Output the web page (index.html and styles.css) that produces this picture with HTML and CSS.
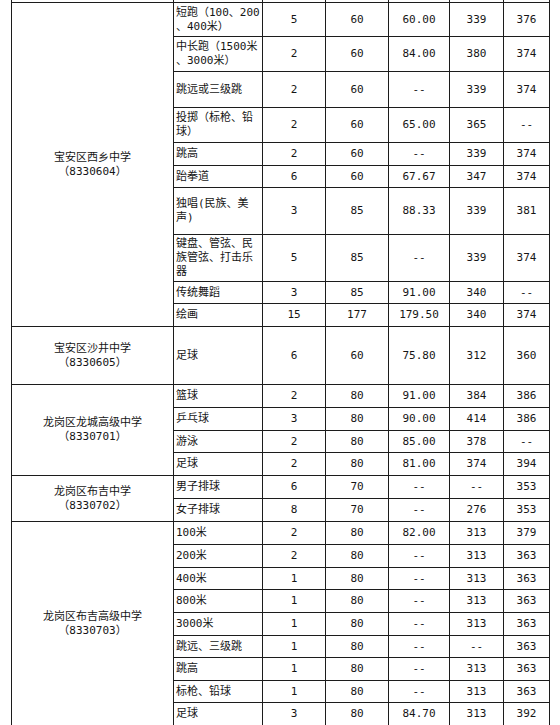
FILE: index.html
```html
<!DOCTYPE html>
<html lang="zh-CN">
<head>
<meta charset="utf-8">
<title>招生表</title>
<link rel="stylesheet" href="styles.css">
</head>
<body>
<table class="grid">
  <colgroup>
    <col class="c-school">
    <col class="c-item">
    <col class="c-num">
    <col class="c-full">
    <col class="c-avg">
    <col class="c-min">
    <col class="c-max">
  </colgroup>
  <tbody>
    <tr class="cut"><td></td><td></td><td></td><td></td><td></td><td></td><td></td></tr>

    <tr class="h34">
      <td class="school" rowspan="10">宝安区西乡中学<br>（8330604）</td>
      <td class="item">短跑（100、200<br>、400米）</td>
      <td>5</td><td>60</td><td>60.00</td><td>339</td><td>376</td>
    </tr>
    <tr class="h35">
      <td class="item">中长跑（1500米<br>、3000米）</td>
      <td>2</td><td>60</td><td>84.00</td><td>380</td><td>374</td>
    </tr>
    <tr class="h36">
      <td class="item">跳远或三级跳</td>
      <td>2</td><td>60</td><td>--</td><td>339</td><td>374</td>
    </tr>
    <tr class="h35">
      <td class="item">投掷（标枪、铅<br>球）</td>
      <td>2</td><td>60</td><td>65.00</td><td>365</td><td>--</td>
    </tr>
    <tr class="h23">
      <td class="item">跳高</td>
      <td>2</td><td>60</td><td>--</td><td>339</td><td>374</td>
    </tr>
    <tr class="h22">
      <td class="item">跆拳道</td>
      <td>6</td><td>60</td><td>67.67</td><td>347</td><td>374</td>
    </tr>
    <tr class="h47">
      <td class="item">独唱(民族、美<br>声)</td>
      <td>3</td><td>85</td><td>88.33</td><td>339</td><td>381</td>
    </tr>
    <tr class="h47">
      <td class="item">键盘、管弦、民<br>族管弦、打击乐<br>器</td>
      <td>5</td><td>85</td><td>--</td><td>339</td><td>374</td>
    </tr>
    <tr class="h22">
      <td class="item">传统舞蹈</td>
      <td>3</td><td>85</td><td>91.00</td><td>340</td><td>--</td>
    </tr>
    <tr class="h23">
      <td class="item">绘画</td>
      <td>15</td><td>177</td><td>179.50</td><td>340</td><td>374</td>
    </tr>

    <tr class="h58">
      <td class="school">宝安区沙井中学<br>（8330605）</td>
      <td class="item">足球</td>
      <td>6</td><td>60</td><td>75.80</td><td>312</td><td>360</td>
    </tr>

    <tr class="h23">
      <td class="school" rowspan="4">龙岗区龙城高级中学<br>（8330701）</td>
      <td class="item">篮球</td>
      <td>2</td><td>80</td><td>91.00</td><td>384</td><td>386</td>
    </tr>
    <tr class="h23">
      <td class="item">乒乓球</td>
      <td>3</td><td>80</td><td>90.00</td><td>414</td><td>386</td>
    </tr>
    <tr class="h22">
      <td class="item">游泳</td>
      <td>2</td><td>80</td><td>85.00</td><td>378</td><td>--</td>
    </tr>
    <tr class="h23">
      <td class="item">足球</td>
      <td>2</td><td>80</td><td>81.00</td><td>374</td><td>394</td>
    </tr>

    <tr class="h23">
      <td class="school" rowspan="2">龙岗区布吉中学<br>（8330702）</td>
      <td class="item">男子排球</td>
      <td>6</td><td>70</td><td>--</td><td>--</td><td>353</td>
    </tr>
    <tr class="h23">
      <td class="item">女子排球</td>
      <td>8</td><td>70</td><td>--</td><td>276</td><td>353</td>
    </tr>

    <tr class="h23">
      <td class="school" rowspan="9">龙岗区布吉高级中学<br>（8330703）</td>
      <td class="item">100米</td>
      <td>2</td><td>80</td><td>82.00</td><td>313</td><td>379</td>
    </tr>
    <tr class="h23">
      <td class="item">200米</td>
      <td>2</td><td>80</td><td>--</td><td>313</td><td>363</td>
    </tr>
    <tr class="h22">
      <td class="item">400米</td>
      <td>1</td><td>80</td><td>--</td><td>313</td><td>363</td>
    </tr>
    <tr class="h23">
      <td class="item">800米</td>
      <td>1</td><td>80</td><td>--</td><td>313</td><td>363</td>
    </tr>
    <tr class="h23">
      <td class="item">3000米</td>
      <td>1</td><td>80</td><td>--</td><td>313</td><td>363</td>
    </tr>
    <tr class="h22">
      <td class="item">跳远、三级跳</td>
      <td>1</td><td>80</td><td>--</td><td>--</td><td>363</td>
    </tr>
    <tr class="h23">
      <td class="item">跳高</td>
      <td>1</td><td>80</td><td>--</td><td>313</td><td>363</td>
    </tr>
    <tr class="h22">
      <td class="item">标枪、铅球</td>
      <td>1</td><td>80</td><td>--</td><td>313</td><td>363</td>
    </tr>
    <tr class="h23">
      <td class="item">足球</td>
      <td>3</td><td>80</td><td>84.70</td><td>313</td><td>392</td>
    </tr>
  </tbody>
</table>
</body>
</html>
```

FILE: styles.css
```css
html, body {
  margin: 0;
  padding: 0;
  background: #ffffff;
}

body {
  padding-left: 11px;
  font-family: "DejaVu Sans Mono", "Noto Sans CJK SC", monospace;
  font-size: 11px;
  line-height: 14px;
  color: #151515;
}

.grid {
  border-collapse: collapse;
  table-layout: fixed;
  width: 538px;
}

.c-school { width: 162px; }
.c-item { width: 89px; }
.c-num { width: 63px; }
.c-full { width: 63px; }
.c-avg { width: 61px; }
.c-min { width: 54px; }
.c-max { width: 46px; }

.grid td {
  border: 1px solid #1c1c1c;
  padding: 0 2px;
  text-align: center;
  vertical-align: middle;
  white-space: nowrap;
}

.grid td.item {
  text-align: left;
  padding-left: 2px;
}

.grid .cut td {
  border-top: none;
  height: 2px;
  padding: 0;
}

.h22 { height: 22px; }
.h23 { height: 23px; }
.h34 { height: 34px; }
.h35 { height: 35px; }
.h36 { height: 36px; }
.h47 { height: 47px; }
.h58 { height: 58px; }
```
